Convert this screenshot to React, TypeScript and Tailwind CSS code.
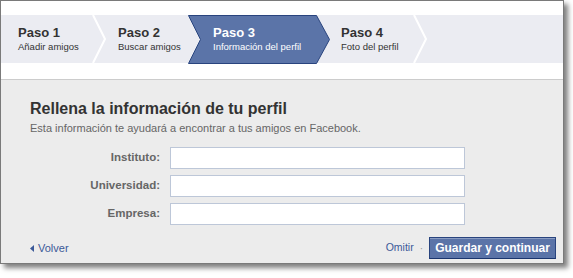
import React from 'react';

const font = { fontFamily: '"Liberation Sans", Arial, sans-serif' };

const Chevron = () => (
  <svg width="14" height="48" viewBox="0 0 14 48" className="shrink-0">
    <polyline points="1,0 13,24 1,48" fill="none" stroke="#ffffff" strokeWidth="2" />
  </svg>
);

const Step = ({ title, sub, className }: { title: string; sub: string; className: string }) => (
  <div className={`shrink-0 flex flex-col pt-[10px] text-[#333] ${className}`}>
    <span className="text-[13px] leading-[15px] font-bold whitespace-nowrap">{title}</span>
    <span className="mt-[1px] text-[9.5px] leading-[12px] whitespace-nowrap">{sub}</span>
  </div>
);

const fields = ['Instituto:', 'Universidad:', 'Empresa:'];

export default function App() {
  return (
    <div className="w-[573px] h-[278px] bg-white" style={font}>
      <div className="w-[564px] h-[264px] border border-[#7a7a7a] bg-white flex flex-col shadow-[4px_4px_5px_rgba(0,0,0,0.5)]">
        <div className="h-[14px] shrink-0" />

        {/* steps */}
        <div className="h-[48px] shrink-0 bg-[#ebecf2] flex">
          <Step title="Paso 1" sub="Añadir amigos" className="w-[91px] pl-[17px]" />
          <Chevron />
          <Step title="Paso 2" sub="Buscar amigos" className="w-[82px] pl-[12px]" />
          <div className="relative w-[142px] shrink-0">
            <svg width="142" height="49" viewBox="0 0 142 49" className="absolute left-0 top-0">
              <polygon
                points="0.5,0.5 128.5,0.5 141.5,24.5 128.5,48.5 0.5,48.5 12.5,24.5"
                fill="#5b74a8"
                stroke="#29447e"
                strokeWidth="1"
              />
            </svg>
            <div className="relative flex flex-col pt-[10px] pl-[25px] text-white">
              <span className="text-[13px] leading-[15px] font-bold whitespace-nowrap">Paso 3</span>
              <span className="mt-[1px] text-[9.5px] leading-[12px] whitespace-nowrap">Información del perfil</span>
            </div>
          </div>
          <Step title="Paso 4" sub="Foto del perfil" className="w-[83px] pl-[11px]" />
          <Chevron />
        </div>

        <div className="h-[16px] shrink-0" />
        <div className="flex-1 bg-[#ececec] border-t border-[#cccccc] pt-[19px] pl-[29px] pr-[7px] flex flex-col">
          <h1 className="text-[16px] leading-[20px] font-bold text-[#333]">Rellena la información de tu perfil</h1>
          <p className="mt-[2px] text-[11px] leading-[14px] text-[#666]">
            Esta información te ayudará a encontrar a tus amigos en Facebook.
          </p>

          <div className="mt-[12px] flex flex-col gap-[6px]">
            {fields.map((f) => (
              <div key={f} className="flex items-center">
                <label className="w-[130px] text-right text-[11.5px] font-bold text-[#666]">{f}</label>
                <input
                  type="text"
                  className="ml-[10px] w-[295px] h-[22px] bg-white border border-[#bdc7d8] outline-none"
                />
              </div>
            ))}
          </div>

          <div className="mt-[12px] flex items-center">
            <a className="flex items-center gap-[4px] text-[11px] text-[#3b5998] cursor-pointer">
              <svg width="4" height="7" viewBox="0 0 4 7">
                <polygon points="4,0 0,3.5 4,7" fill="#3b5998" />
              </svg>
              Volver
            </a>
            <div className="ml-auto flex items-center">
              <a className="text-[10.5px] text-[#3b5998] cursor-pointer">Omitir</a>
              <span className="mx-[6px] text-[10px] text-[#999]">·</span>
              <button className="h-[22px] w-[127px] bg-[#5b74a8] border border-[#29447e] border-b-[#1a356e] shadow-[inset_0_1px_0_#8a9cc2] text-white text-[12px] font-bold leading-[20px]">
                Guardar y continuar
              </button>
            </div>
          </div>
        </div>
      </div>
    </div>
  );
}
